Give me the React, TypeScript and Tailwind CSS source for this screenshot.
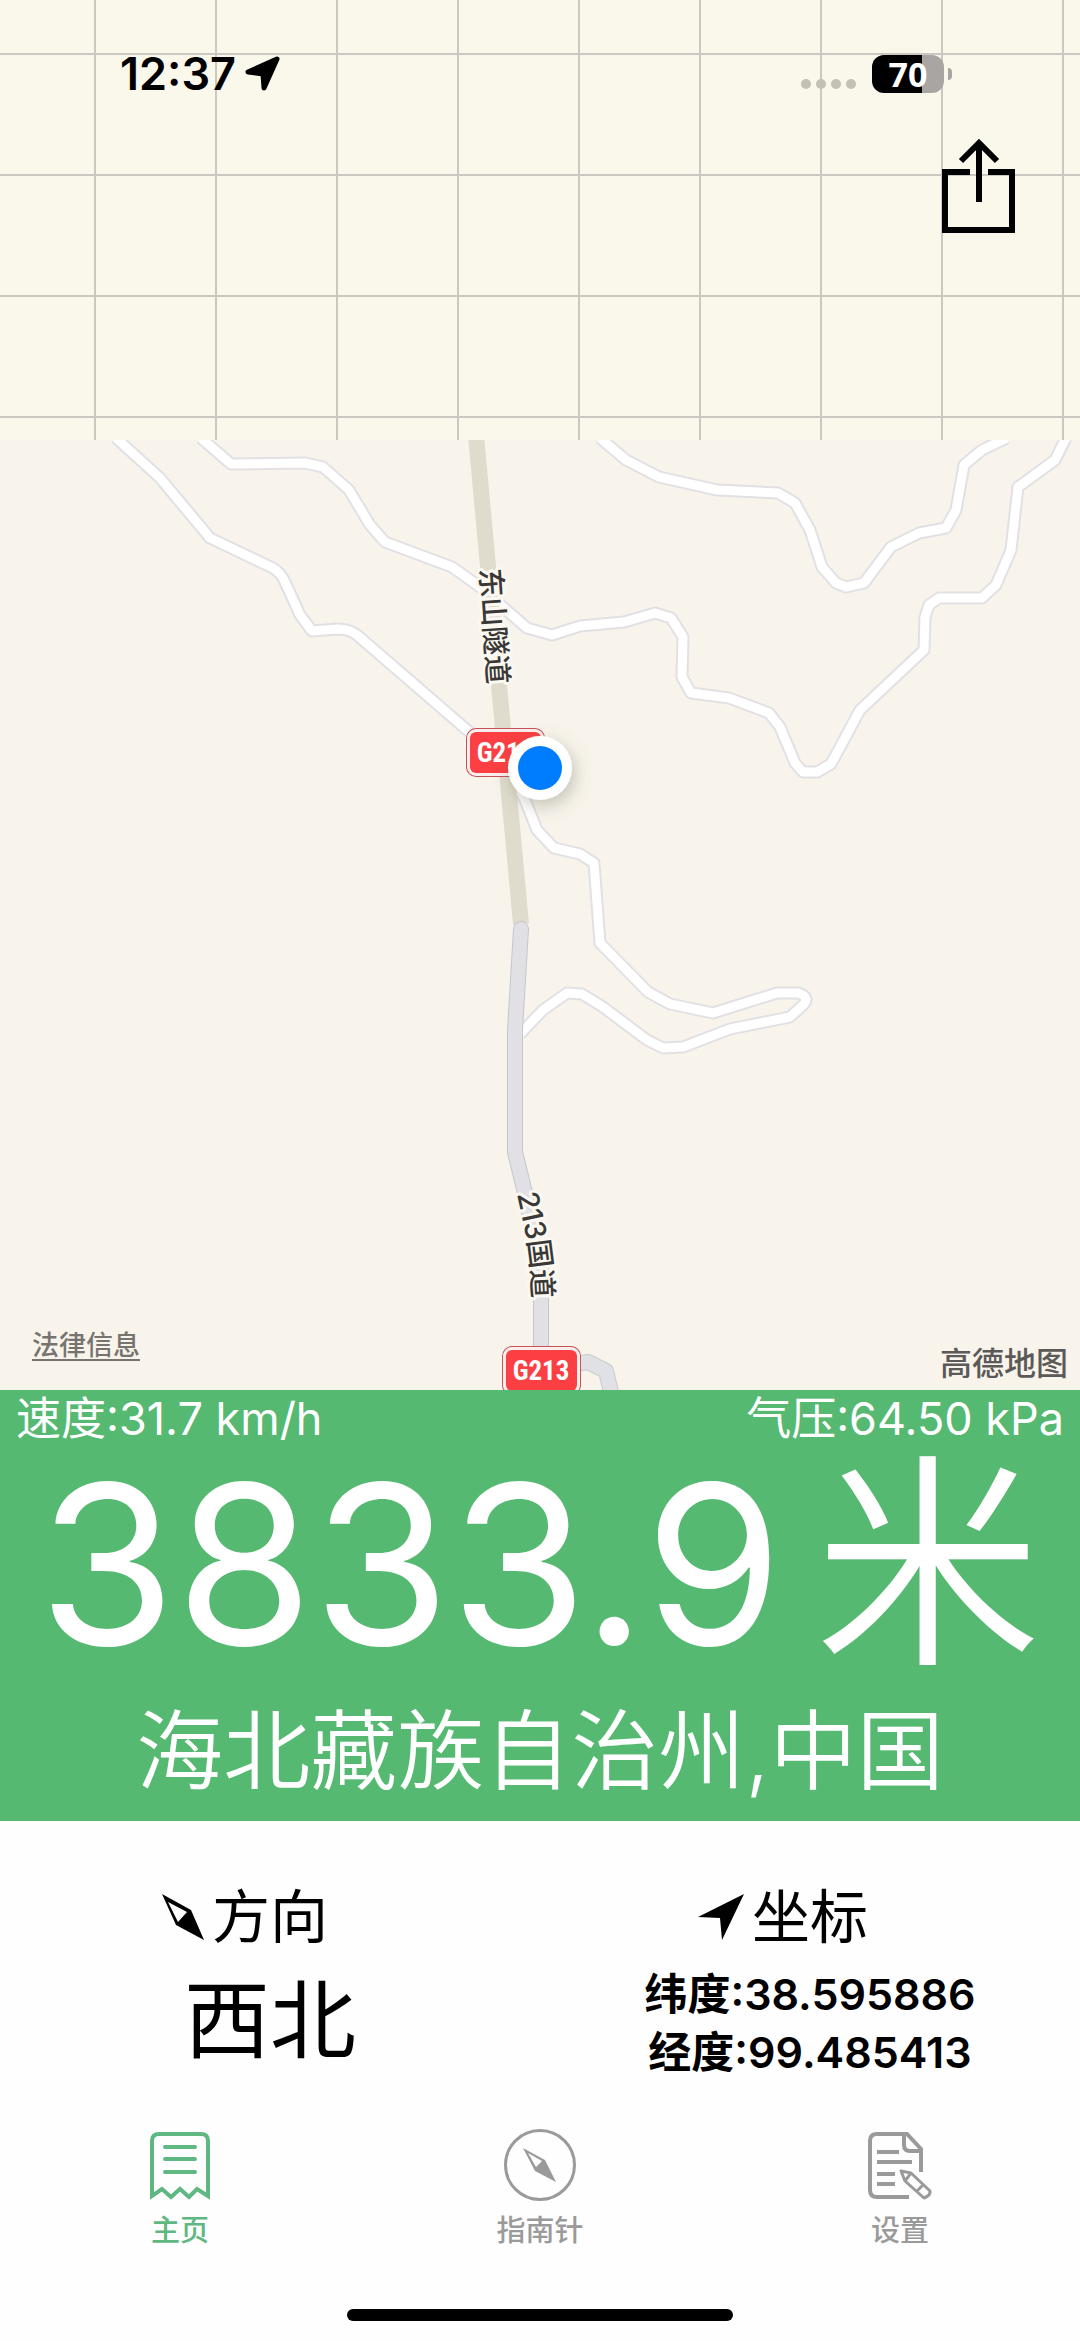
import type { ReactNode } from "react"
import clsx from "clsx"

const localRoads = [
  // west road, runs under the marker and loops back to the highway
  "M116 438 L160 478 L210 538 L273 568 Q281 573 285 582 L300 615 L312 631 L338 629 Q349 629 357 635 L467 730 L505 760 L525 800 L537 830 L554 848 L580 854 L594 863 L600 943 L648 992 L670 1004 L713 1013 L777 993 L798 993 Q810 997 804 1004 L790 1017 L730 1029 L683 1047 L663 1048 L647 1040 L603 1007 L582 994 L567 993 L543 1010 L520 1034",
  // long road crossing the tunnel
  "M201 438 L231 464 L305 463 L323 467 L349 490 L370 525 L385 542 L452 567 L480 587 L527 628 L552 635 L580 626 L624 622 L655 613 L671 618 L683 637 L682 677 L691 693 L729 698 L769 713 L780 727 L795 763 L803 772 L817 772 L831 764 L860 710 L924 650 L925 617 L929 605 L939 598 L982 598 L996 585 L1011 550 L1018 487 L1055 460 L1066 438",
  // north east road
  "M600 438 L626 460 L659 477 L717 490 L778 493 L795 503 L810 530 L822 567 L836 583 L846 587 L864 583 L891 547 L919 533 L946 528 L956 510 L964 465 L982 450 L1007 438",
]

const highway = "M521 929 L515 1030 L515 1152 L525 1193 L541 1270 L541 1392"
const ramp = "M560 1366 L588 1362 L606 1371 L611 1392"

function RoadShield({ x, y }: { x: number; y: number }) {
  return (
    <g>
      <rect x={x} y={y} width="79" height="49" rx="10" fill="#c65157" />
      <rect x={x + 1} y={y + 1} width="77" height="47" rx="9" fill="#fdeeee" />
      <rect x={x + 4} y={y + 4} width="71" height="41" rx="6" fill="#fb3f42" />
      <text
        x={x + 39}
        y={y + 34}
        textAnchor="middle"
        fill="#fff"
        className="font-['Liberation_Sans_Narrow','Roboto_Condensed',Roboto,sans-serif] text-[27px] font-bold"
      >
        G213
      </text>
    </g>
  )
}

function MapView() {
  return (
    <section className="relative bg-[#f8f4ec]">
      <svg viewBox="0 440 1080 950" className="block w-full" role="img" aria-label="地图">
        <defs>
          <path id="tunnel-label" d="M480 569 L489 700" />
          <path id="highway-label" d="M517 1194 L529 1250 Q533 1276 533 1330" />
          <filter id="marker-shadow" x="-60%" y="-60%" width="220%" height="220%">
            <feDropShadow dx="3" dy="6" stdDeviation="9" floodColor="#5d6650" floodOpacity="0.35" />
          </filter>
        </defs>

        <g fill="none" strokeLinejoin="round">
          {localRoads.map((d) => (
            <path key={d} d={d} stroke="#e2e0e4" strokeWidth="13" />
          ))}
          {localRoads.map((d) => (
            <path key={d} d={d} stroke="#fff" strokeWidth="9" />
          ))}
          <path d="M476 436 L521 924" stroke="#dfdccd" strokeWidth="16" />
          <path d={ramp} stroke="#cacacf" strokeWidth="16" />
          <path d={ramp} stroke="#e0e1e4" strokeWidth="14" />
          <path d={highway} stroke="#c6c5ce" strokeWidth="16" strokeLinecap="round" />
          <path d={highway} stroke="#e1e1e5" strokeWidth="14" strokeLinecap="round" />
        </g>

        <g
          fill="#3a3836"
          stroke="#fbf8f2"
          strokeWidth="6"
          strokeLinejoin="round"
          paintOrder="stroke"
          className="font-[Inter,'Noto_Sans_CJK_SC',sans-serif] text-[29px] font-medium"
        >
          <text>
            <textPath href="#tunnel-label">东山隧道</textPath>
          </text>
          <text>
            <textPath href="#highway-label">213国道</textPath>
          </text>
        </g>

        <RoadShield x={466} y={728} />
        <RoadShield x={502} y={1346} />

        <circle cx="540" cy="768" r="32" fill="#fff" filter="url(#marker-shadow)" />
        <circle cx="540" cy="768" r="22" fill="#007dfe" />
      </svg>

      <a href="#legal" className="absolute bottom-6 left-8 text-[27px] leading-10 font-medium text-[#77746f] underline underline-offset-4">
        法律信息
      </a>
      <span className="absolute right-3 bottom-2 text-[32px] leading-9 font-medium text-[#5c5a58]">高德地图</span>
    </section>
  )
}

function StatusBar() {
  return (
    <div className="flex items-center justify-between pt-12 pr-32 pl-30">
      <div className="flex items-center gap-2">
        <span className="text-[45px] leading-[52px] font-semibold">12:37</span>
        <svg viewBox="0 0 36 36" className="size-9" aria-hidden="true">
          <path
            d="M33 3 L4 16 L19 18 L20 32 Z"
            fill="#000"
            stroke="#000"
            strokeWidth="5"
            strokeLinejoin="round"
          />
        </svg>
      </div>
      <div className="flex items-center gap-4">
        <div className="flex gap-[5px] pt-5">
          {[0, 1, 2, 3].map((i) => (
            <span key={i} className="size-[10px] rounded-full bg-[#c3c1b6]" />
          ))}
        </div>
        <div className="flex items-center gap-1">
          <div className="flex h-[38px] w-[72px] items-center justify-center rounded-xl bg-linear-to-r from-black from-70% to-[#a8a5a3] to-70% font-['Open_Sans',sans-serif] text-[34px] leading-none font-bold text-white">
            70
          </div>
          <span className="h-3 w-1 rounded-r-full bg-[#a8a5a3]" />
        </div>
      </div>
    </div>
  )
}

function Header() {
  return (
    <header className="h-[440px] bg-[#faf7eb] bg-[linear-gradient(to_right,#cac8c0_2px,transparent_2px),linear-gradient(to_bottom,#cac8c0_2px,transparent_2px)] bg-[size:121px_121px] bg-[position:94px_53px]">
      <StatusBar />
      <div className="flex justify-end pt-9 pr-16">
        <button type="button" aria-label="分享">
          <svg viewBox="0 0 74 98" className="block h-[98px] w-[74px]" fill="none" stroke="#000" strokeWidth="6">
            <path d="M28 36 H3 V94 H70 V36 H46" />
            <path d="M37 66 V8" />
            <path d="M19 25 L37 7 L55 25" />
          </svg>
        </button>
      </div>
    </header>
  )
}

function Altitude() {
  return (
    <section className="bg-[#55b971] text-white">
      <div className="flex justify-between px-4 text-[45px] leading-[58px] font-normal">
        <span>速度:31.7 km/h</span>
        <span>气压:64.50 kPa</span>
      </div>
      <h1 className="flex items-center justify-center gap-8 leading-[234px]">
        <span className="text-[222px]">3833.9</span>
        <span className="text-[227px] font-[350]">米</span>
      </h1>
      <p className="text-center text-[87px] leading-[139px] font-[350]">海北藏族自治州,中国</p>
    </section>
  )
}

function InfoTitle({ icon, children }: { icon: ReactNode; children: ReactNode }) {
  return (
    <h2 className="grid grid-cols-[1fr_auto_1fr] items-center gap-2 text-[58px] leading-[72px]">
      <span className="justify-self-end">{icon}</span>
      <span>{children}</span>
      <span />
    </h2>
  )
}

function NeedleIcon() {
  return (
    <svg viewBox="0 0 42 46" className="block h-[46px] w-[42px]" aria-hidden="true">
      <path fillRule="evenodd" d="M0 0 L29 16 L42 46 L14 31 Z M6 8 L16 28 L25 18 Z" />
    </svg>
  )
}

function ArrowIcon() {
  return (
    <svg viewBox="0 0 46 46" className="block size-[46px]" aria-hidden="true">
      <path d="M46 0 L0 23 L22 24 L24 46 Z" />
    </svg>
  )
}

function HomeIcon() {
  return (
    <svg viewBox="0 0 72 72" className="size-[72px]" fill="none" stroke="currentColor" aria-hidden="true">
      <path
        strokeWidth="4"
        d="M8 67 V12 Q8 5 15 5 H57 Q64 5 64 12 V67 L53 60 L45 68 L36 60 L27 68 L18 60 Z"
      />
      <path strokeWidth="4" strokeLinecap="round" d="M21 18 H51 M21 30 H51 M21 43 H51" />
    </svg>
  )
}

function CompassIcon() {
  return (
    <svg viewBox="0 0 72 72" className="size-[72px]" aria-hidden="true">
      <circle cx="36" cy="36" r="34.500" fill="none" stroke="currentColor" strokeWidth="3" />
      <path fill="currentColor" fillRule="evenodd" d="M19 19 L41 31 L52 53 L31 42 Z M24 24 L32 38 L38 32 Z" />
    </svg>
  )
}

function SettingsIcon() {
  return (
    <svg viewBox="0 0 72 72" className="size-[72px]" fill="none" stroke="currentColor" aria-hidden="true">
      <path strokeWidth="4" d="M45 68 H13 Q6 68 6 61 V12 Q6 5 13 5 H43 L57 20 V43" />
      <path strokeWidth="4" d="M40 5 V16 Q40 22 46 22 H57" />
      <path strokeWidth="4" d="M13 23 H35 M13 33 H48 M13 45 H31 M13 55 H31" />
      <path strokeWidth="3" strokeLinejoin="round" d="M37 42 L47 44 L66 62 Q67 66 60 69 L41 52 Z M59 56 L52 63 M41 52 L47 44" />
    </svg>
  )
}

const tabs = [
  { label: "主页", href: "#home", icon: <HomeIcon />, active: true },
  { label: "指南针", href: "#compass", icon: <CompassIcon />, active: false },
  { label: "设置", href: "#settings", icon: <SettingsIcon />, active: false },
]

export default function App() {
  return (
    <main className="min-h-screen bg-[#fefefe] font-[Inter,'Noto_Sans_CJK_SC',sans-serif] text-black">
      <Header />
      <MapView />
      <Altitude />

      {/* Direction and coordinates */}
      <section className="grid grid-cols-2 pt-15 text-center">
        <div>
          <InfoTitle icon={<NeedleIcon />}>方向</InfoTitle>
          <p className="mt-3 text-[86px] leading-[112px]">西北</p>
        </div>
        <div>
          <InfoTitle icon={<ArrowIcon />}>坐标</InfoTitle>
          <div className="mt-3 text-[43px] leading-[58px] font-semibold">
            <p>纬度:38.595886</p>
            <p>经度:99.485413</p>
          </div>
        </div>
      </section>

      {/* Tab bar */}
      <nav className="mt-12 grid grid-cols-3">
        {tabs.map((tab) => (
          <a
            key={tab.label}
            href={tab.href}
            aria-current={tab.active ? "page" : undefined}
            className={clsx(
              "flex flex-col items-center gap-2 text-[29px] leading-11 font-medium",
              tab.active ? "text-[#5fb882]" : "text-[#9a9a9a]",
            )}
          >
            {tab.icon}
            <span>{tab.label}</span>
          </a>
        ))}
      </nav>

      <div className="mx-auto mt-14 h-3 w-[386px] rounded-full bg-black" />
    </main>
  )
}
